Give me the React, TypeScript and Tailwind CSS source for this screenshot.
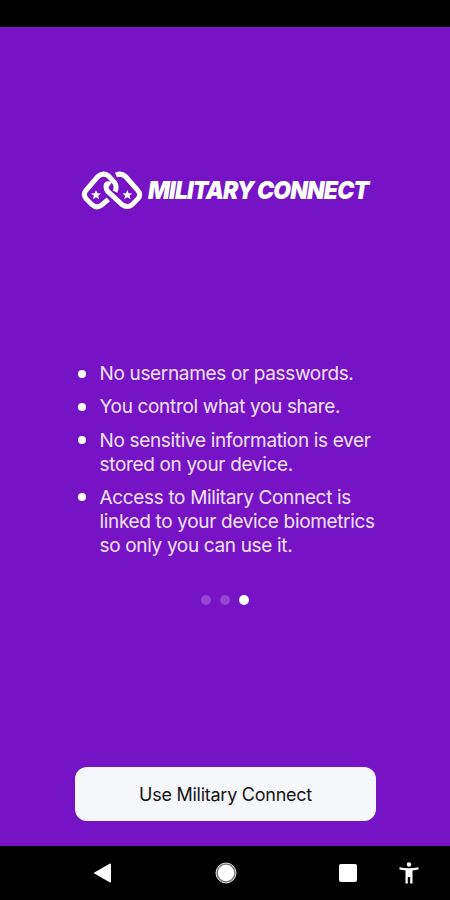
const items = [
  ["No usernames or passwords."],
  ["You control what you share."],
  ["No sensitive information is ever", "stored on your device."],
  ["Access to Military Connect is", "linked to your device biometrics", "so only you can use it."],
];

function LinkLogo() {
  return (
    <svg width="62" height="40" viewBox="33 30 186 120" fill="none" stroke="white" strokeWidth="15">
      <path d="M115 118 L94 136 Q80 146 66 134 L48 116 Q38 104 48 91 L84 49 Q100 36 116 48 L134 68 Q142 80 135 95" />
      <path d="M138 45 Q154 38 166 49 L204 92 Q214 104 204 116 L186 134 Q172 145 156 134 L113 94 Q106 84 109 74 Q112 68 121 74" />
      <g fill="white" stroke="none">
        <path d="M78 90 L82 99.500 L92.500 100.500 L84.500 107 L87.500 117.500 L78 112 L68.500 117.500 L71.500 107 L63.500 100.500 L74 99.500 Z" />
        <path d="M172 90 L176 99.500 L186.500 100.500 L178.500 107 L181.500 117.500 L172 112 L162.500 117.500 L165.500 107 L157.500 100.500 L168 99.500 Z" />
      </g>
    </svg>
  );
}

function NavigationBar() {
  return (
    <nav className="flex h-[54px] shrink-0 items-center bg-black pl-[93px] text-white">
      <button aria-label="Back" className="mr-[104px]">
        <svg width="18" height="20" viewBox="0 0 18 20" fill="currentColor">
          <path d="M0.500 10 L17 0.500 Q18 0.300 18 1.500 V18.500 Q18 19.700 17 19.500 Z" />
        </svg>
      </button>
      <button aria-label="Home" className="mr-[102px]">
        <svg width="22" height="22" viewBox="0 0 22 22">
          <circle cx="11" cy="11" r="10" fill="#777" stroke="#ddd" />
          <circle cx="11" cy="11" r="8.200" fill="white" />
        </svg>
      </button>
      <button aria-label="Recent apps" className="mr-[42px] size-[18px] rounded-[2px] bg-white" />
      <button aria-label="Accessibility">
        <svg width="20" height="22" viewBox="0 0 20 22" fill="currentColor">
          <circle cx="10" cy="2.500" r="2.200" />
          <path d="M0.500 5.300 Q10 7 19.500 5.300 V7.600 L13.500 8.500 V21.500 H11.200 V15 H8.800 V21.500 H6.500 V8.500 L0.500 7.600 Z" />
        </svg>
      </button>
    </nav>
  );
}

export default function App() {
  return (
    <div className="flex h-[900px] w-[450px] flex-col overflow-hidden bg-black font-['Inter',sans-serif]">
      <div className="h-[27px] shrink-0" />
      <main className="flex h-[819px] shrink-0 flex-col bg-[#7614c5] text-white">
        <header className="mt-[143px] flex h-10 items-center pl-[81px]">
          <LinkLogo />
          <h1 className="ml-[5px] origin-left scale-x-[0.916] text-[25px] leading-none font-black tracking-[-0.900px] whitespace-nowrap italic [word-spacing:-0.500px]">
            MILITARY CONNECT
          </h1>
        </header>

        <ul className="mt-[152px] flex flex-col gap-[9.300px] pl-[78px]">
          {items.map((lines) => (
            <li key={lines[0]} className="flex text-[19px] leading-6 text-[#f0e2fa]">
              <span className="mt-[7.500px] mr-[13.500px] size-2 shrink-0 rounded-full bg-white" />
              <p className="tracking-[-0.340px] whitespace-nowrap">
                {lines.map((line) => (
                  <span key={line} className="block">{line}</span>
                ))}
              </p>
            </li>
          ))}
        </ul>

        {/* Page dots */}
        <div className="mt-[37px] flex items-center justify-center gap-[9px]">
          <span className="size-[10px] rounded-full bg-[#9645d4]" />
          <span className="size-[10px] rounded-full bg-[#9645d4]" />
          <span className="size-[10px] rounded-full bg-white" />
        </div>

        <button className="mt-auto mb-[25px] ml-[75px] h-[54px] w-[301px] rounded-[12px] bg-[#f6f7fb] text-[18px] tracking-[-0.250px] text-[#151515]">
          Use Military Connect
        </button>
      </main>
      <NavigationBar />
    </div>
  );
}
